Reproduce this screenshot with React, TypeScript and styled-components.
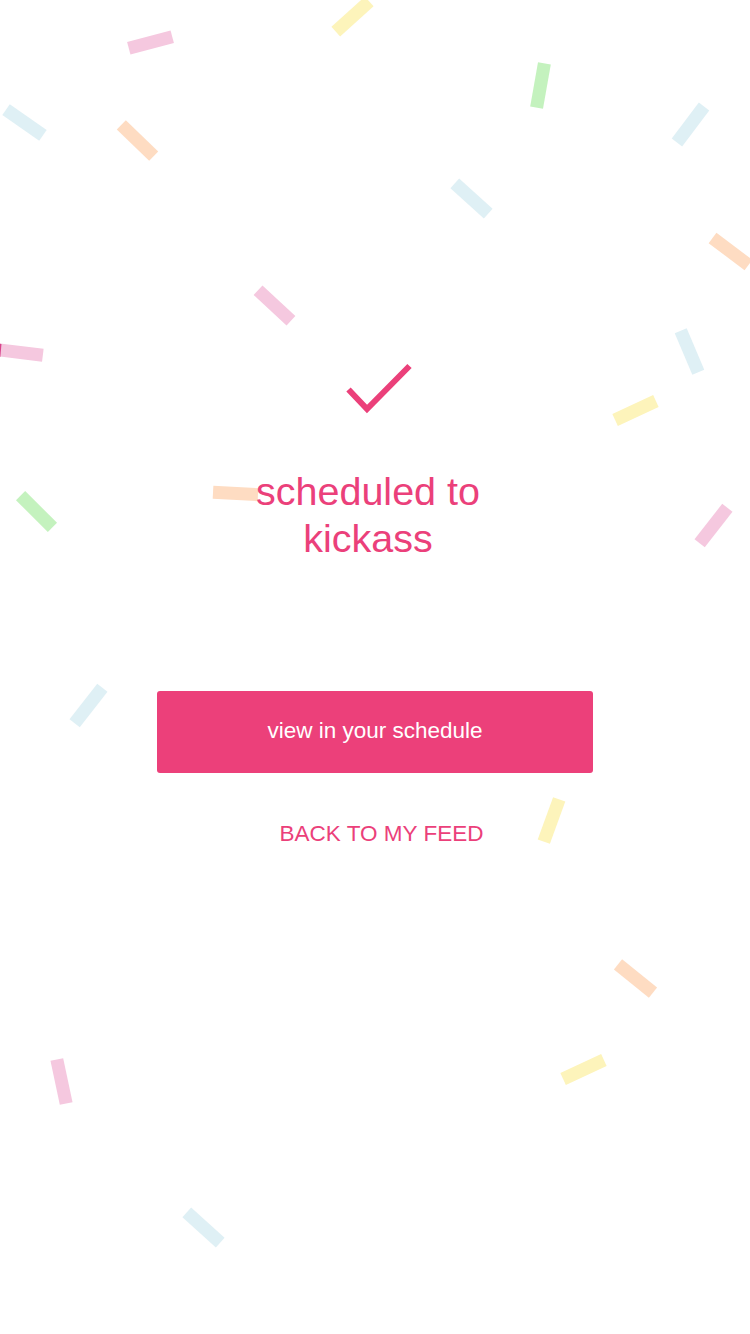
import React from "react";
import styled, { createGlobalStyle } from "styled-components";

const GlobalStyle = createGlobalStyle`
  html, body {
    margin: 0;
    padding: 0;
    background: #ffffff;
  }
  body {
    font-family: "Liberation Sans", Arial, Helvetica, sans-serif;
    -webkit-font-smoothing: antialiased;
  }
  * { box-sizing: border-box; }
`;

const PINK = "#eb407a";

const Page = styled.main`
  position: relative;
  width: 750px;
  height: 1334px;
  overflow: hidden;
  background: #ffffff;
`;

const ConfettiLayer = styled.div`
  position: absolute;
  inset: 0;
  pointer-events: none;
  z-index: 0;
`;

const Piece = styled.span<{ $x: number; $y: number; $a: number; $c: string; $l?: number }>`
  position: absolute;
  display: block;
  width: ${(p) => p.$l ?? 45}px;
  height: 13px;
  left: ${(p) => p.$x - (p.$l ?? 45) / 2}px;
  top: ${(p) => p.$y - 6.5}px;
  background: ${(p) => p.$c};
  transform: rotate(${(p) => p.$a}deg);
`;

const Content = styled.section`
  position: relative;
  z-index: 1;
  display: flex;
  flex-direction: column;
  align-items: center;
  padding-top: 356px;
`;

const CheckIcon = styled.svg`
  display: block;
  width: 80px;
  height: 64px;
  margin-left: 10px;
`;

const Title = styled.h1`
  margin: 48px 14px 0 0;
  font-family: "Liberation Sans", Arial, Helvetica, sans-serif;
  font-weight: 400;
  font-size: 39.5px;
  line-height: 47px;
  color: ${PINK};
  text-align: center;
  width: 300px;
`;

const PrimaryButton = styled.button`
  margin-top: 129px;
  width: 436px;
  height: 82px;
  border: none;
  border-radius: 3px;
  background: #ec407a;
  color: #ffffff;
  font-family: "Liberation Sans", Arial, Helvetica, sans-serif;
  font-size: 22.5px;
  font-weight: 400;
  cursor: pointer;
  padding: 0 0 2px 0;
`;

const TextLink = styled.button`
  margin: 48px 0 0 13px;
  border: none;
  background: transparent;
  padding: 0;
  color: ${PINK};
  font-family: "Liberation Sans", Arial, Helvetica, sans-serif;
  font-size: 22.5px;
  line-height: 26px;
  text-transform: uppercase;
  cursor: pointer;
`;

const C = {
  pink: "#f5c8df",
  blue: "#dff0f5",
  orange: "#fedcc2",
  yellow: "#fdf4bb",
  green: "#c4f2be",
  deep: "#d8458c",
};

const confetti: { x: number; y: number; a: number; c: string; l?: number }[] = [
  { x: 352, y: 16, a: -42, c: C.yellow },
  { x: 150, y: 42, a: -15, c: C.pink },
  { x: 24, y: 122, a: 35, c: C.blue },
  { x: 137, y: 140, a: 44, c: C.orange },
  { x: 540, y: 85, a: 100, c: C.green },
  { x: 690, y: 124, a: 127, c: C.blue },
  { x: 471, y: 198, a: 42, c: C.blue },
  { x: 730, y: 251, a: 37, c: C.orange },
  { x: 274, y: 305, a: 43, c: C.pink },
  { x: 20, y: 352, a: 7, c: C.pink },
  { x: -22, y: 348, a: 5, c: C.deep },
  { x: 689, y: 351, a: 67, c: C.blue },
  { x: 635, y: 410, a: -25, c: C.yellow },
  { x: 235, y: 493, a: 3, c: C.orange },
  { x: 36, y: 511, a: 45, c: C.green },
  { x: 88, y: 705, a: 128, c: C.blue },
  { x: 713, y: 525, a: 128, c: C.pink },
  { x: 551, y: 820, a: 110, c: C.yellow },
  { x: 635, y: 978, a: 39, c: C.orange },
  { x: 583, y: 1069, a: -25, c: C.yellow },
  { x: 61, y: 1081, a: 78, c: C.pink },
  { x: 203, y: 1227, a: 42, c: C.blue },
];

export default function App() {
  return (
    <>
      <GlobalStyle />
      <Page>
        <ConfettiLayer aria-hidden="true">
          {confetti.map((p, i) => (
            <Piece key={i} $x={p.x} $y={p.y} $a={p.a} $c={p.c} $l={p.l} />
          ))}
        </ConfettiLayer>
        <Content>
          <CheckIcon viewBox="0 0 80 64" aria-hidden="true">
            <polyline
              points="8.5,33.5 27,53 69.5,10"
              fill="none"
              stroke={PINK}
              strokeWidth={6}
              strokeLinecap="butt"
              strokeLinejoin="miter"
            />
          </CheckIcon>
          <Title>scheduled to kickass</Title>
          <PrimaryButton>view in your schedule</PrimaryButton>
          <TextLink>Back to my feed</TextLink>
        </Content>
      </Page>
    </>
  );
}
